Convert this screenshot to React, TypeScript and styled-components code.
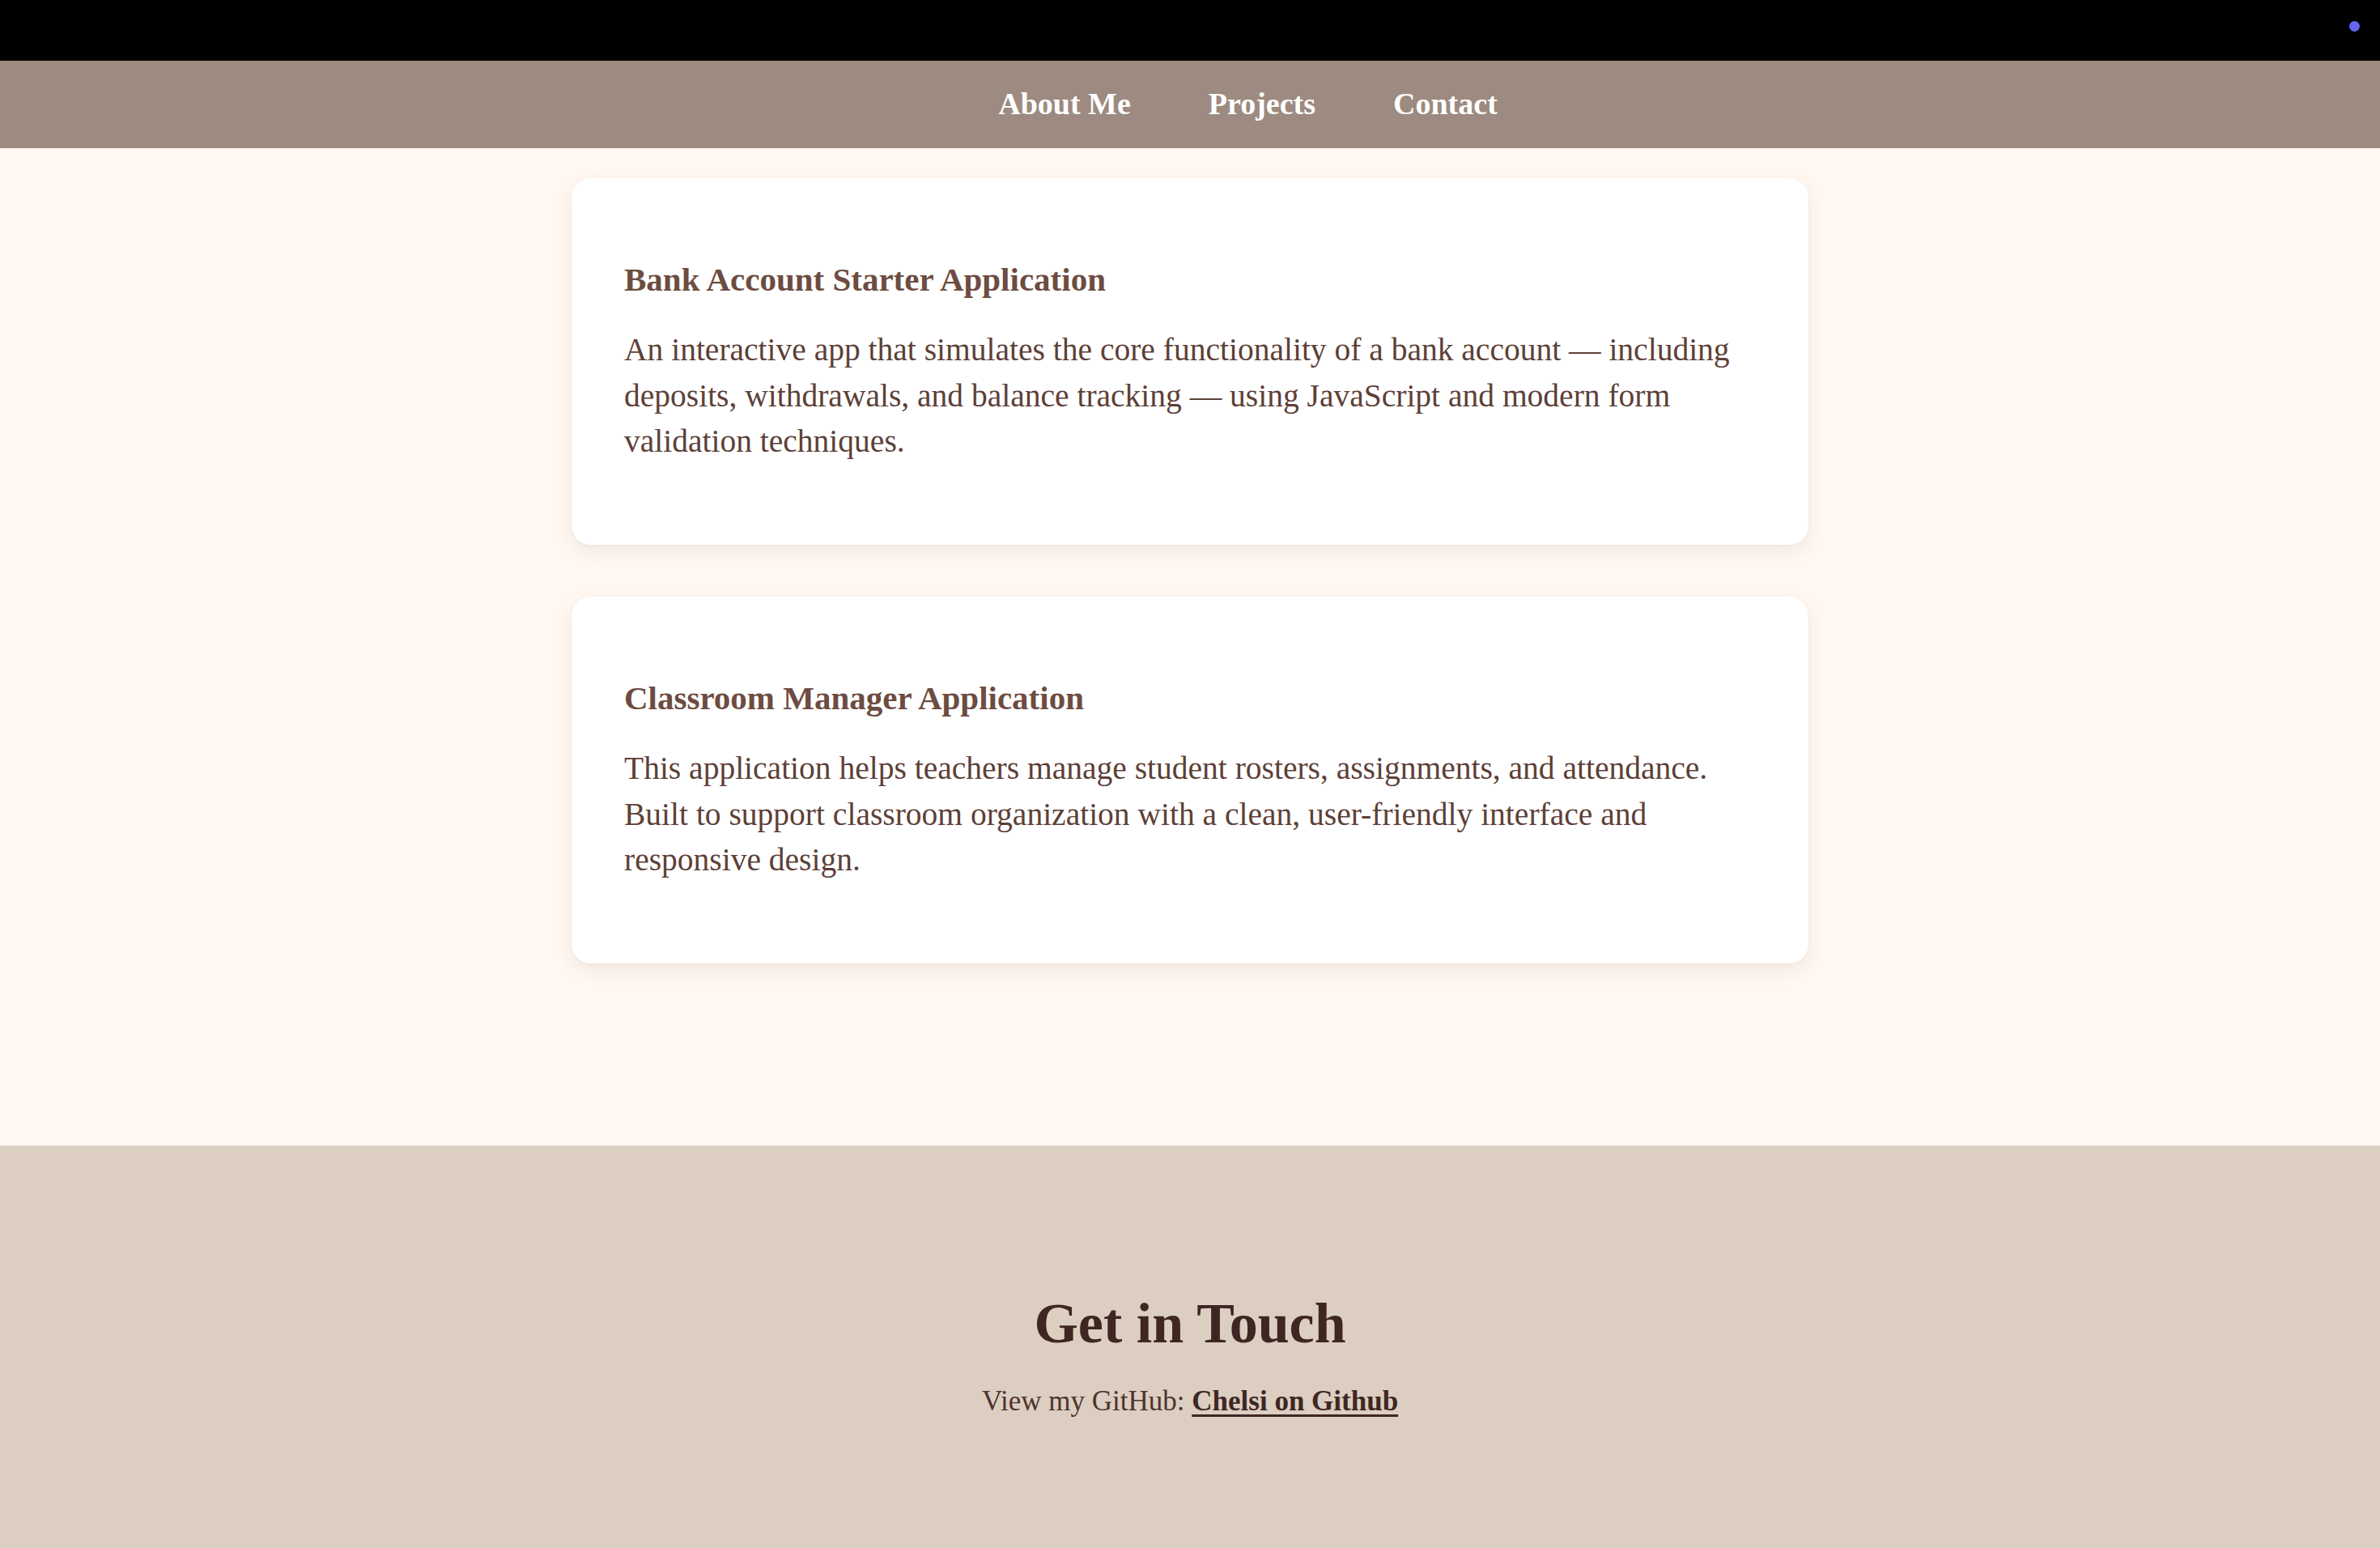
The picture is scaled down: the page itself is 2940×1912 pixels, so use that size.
import React from "react";
import styled, { createGlobalStyle } from "styled-components";

const GlobalStyle = createGlobalStyle`
  html, body {
    margin: 0;
    padding: 0;
    background: #fff7f0;
  }
  body {
    font-family: "Liberation Serif", "Times New Roman", serif;
    -webkit-font-smoothing: antialiased;
  }
  * { box-sizing: border-box; }
`;

const TopBar = styled.div`
  height: 75px;
  background: #000;
  display: flex;
  justify-content: flex-end;
  align-items: flex-start;
  padding: 26px 25px 0 0;
`;

const Dot = styled.span`
  width: 13px;
  height: 13px;
  border-radius: 50%;
  background: #6466ef;
  display: block;
`;

const NavBar = styled.nav`
  height: 108px;
  background: #9d8a80;
  display: flex;
  justify-content: center;
  align-items: center;
  padding-left: 143px;
`;

const NavList = styled.ul`
  display: flex;
  gap: 96px;
  list-style: none;
  margin: 0;
  padding: 0;
`;

const NavLink = styled.a`
  color: #ffffff;
  font-weight: 700;
  font-size: 38px;
  text-decoration: none;
  line-height: 1.15;
`;

const Main = styled.main`
  background: #fff7f0;
  padding: 37px 0 225px;
  display: flex;
  flex-direction: column;
  align-items: center;
  gap: 64px;
`;

const Card = styled.article`
  width: 1528px;
  background: #ffffff;
  border-radius: 24px;
  box-shadow: 0 8px 22px rgba(93, 64, 55, 0.08), 0 1px 4px rgba(93, 64, 55, 0.04);
  padding: 103px 65px 99px;
  display: flex;
  flex-direction: column;
  gap: 36px;
`;

const CardTitle = styled.h3`
  margin: 0;
  font-size: 41px;
  font-weight: 700;
  line-height: 1.107;
  color: #6d4c41;
`;

const CardText = styled.p`
  margin: 0;
  font-size: 39.5px;
  line-height: 56.5px;
  color: #5d4037;
`;

const Footer = styled.footer`
  background: #dccec1;
  padding: 180px 0 183px;
  display: flex;
  flex-direction: column;
  align-items: center;
  gap: 36px;
`;

const FooterTitle = styled.h2`
  margin: 0;
  font-size: 70px;
  font-weight: 700;
  line-height: 1.15;
  color: #3e2723;
`;

const FooterText = styled.p`
  margin: 0;
  font-size: 35px;
  line-height: 1.15;
  color: #4e342e;
`;

const FooterLink = styled.a`
  color: #3e2723;
  font-weight: 700;
  text-decoration: underline;
  text-decoration-thickness: 3px;
  text-underline-offset: 5px;
`;

const projects = [
  {
    title: "Bank Account Starter Application",
    text: "An interactive app that simulates the core functionality of a bank account — including deposits, withdrawals, and balance tracking — using JavaScript and modern form validation techniques.",
  },
  {
    title: "Classroom Manager Application",
    text: "This application helps teachers manage student rosters, assignments, and attendance. Built to support classroom organization with a clean, user-friendly interface and responsive design.",
  },
];

export default function App() {
  return (
    <>
      <GlobalStyle />
      <TopBar>
        <Dot />
      </TopBar>
      <NavBar>
        <NavList>
          <li><NavLink href="#about">About Me</NavLink></li>
          <li><NavLink href="#projects">Projects</NavLink></li>
          <li><NavLink href="#contact">Contact</NavLink></li>
        </NavList>
      </NavBar>
      <Main id="projects">
        {projects.map((p) => (
          <Card key={p.title}>
            <CardTitle>{p.title}</CardTitle>
            <CardText>{p.text}</CardText>
          </Card>
        ))}
      </Main>
      <Footer id="contact">
        <FooterTitle>Get in Touch</FooterTitle>
        <FooterText>
          View my GitHub: <FooterLink href="#">Chelsi on Github</FooterLink>
        </FooterText>
      </Footer>
    </>
  );
}
